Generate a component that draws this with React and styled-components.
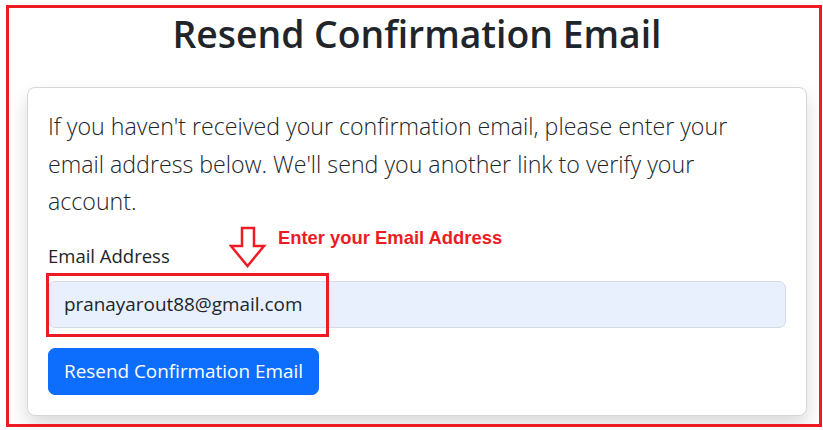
import React from 'react';
import styled, { createGlobalStyle } from 'styled-components';

const GlobalStyle = createGlobalStyle`
  html, body {
    margin: 0;
    padding: 0;
    background: #fff;
  }
  body {
    font-family: 'Open Sans', 'Noto Sans', sans-serif;
    color: #212529;
  }
  * {
    box-sizing: border-box;
  }
`;

// red frame of the annotated screenshot
const Frame = styled.div`
  display: flex;
  flex-direction: column;
  align-items: center;
  gap: 31px;
  width: 816px;
  height: 422px;
  margin: 5px 0 0 6px;
  padding: 4px 12px 0 18px;
  border: 3px solid #ed1c24;
  overflow: hidden;
`;

const Title = styled.h2`
  margin: 0;
  font-size: 37.3px;
  font-weight: 600;
  line-height: 44px;
  color: #212529;
`;

const Card = styled.div`
  display: flex;
  flex-direction: column;
  align-items: stretch;
  gap: 20px;
  width: 780px;
  padding: 20px;
  background: #fff;
  border: 1px solid #d6d6d6;
  border-radius: 8px;
  box-shadow: 0 10px 20px rgba(0, 0, 0, 0.15);
`;

const Lead = styled.p`
  max-width: 712px;
  margin: 0;
  font-size: 23.2px;
  font-weight: 300;
  line-height: 37.5px;
  color: #212529;
`;

const Field = styled.div`
  position: relative;
  display: flex;
  flex-direction: column;
  gap: 10px;
`;

const Label = styled.label`
  font-size: 18.5px;
  line-height: 30px;
`;

const Input = styled.input`
  width: 100%;
  height: 47px;
  padding: 0 15px;
  font-family: inherit;
  font-size: 18.9px;
  color: #212529;
  background: #e8f0fe;
  border: 1px solid #d5dbe3;
  border-radius: 7px;
  outline: none;
`;

const Button = styled.button`
  align-self: flex-start;
  height: 47px;
  padding: 0 15px;
  font-family: inherit;
  font-size: 18.9px;
  color: #fff;
  background: #0d6efd;
  border: 1px solid #0d6efd;
  border-radius: 7px;
  cursor: pointer;
`;

// annotation overlays
const Arrow = styled.svg`
  position: absolute;
  left: 181px;
  top: -15px;
`;

const Note = styled.span`
  position: absolute;
  left: 230px;
  top: -14px;
  font-family: 'Liberation Sans', Arial, sans-serif;
  font-size: 18.4px;
  font-weight: 700;
  line-height: 22px;
  color: #ed1c24;
`;

const Highlight = styled.div`
  position: absolute;
  left: -2px;
  top: 32px;
  width: 283px;
  height: 64px;
  border: 3px solid #ed1c24;
  pointer-events: none;
`;

export default function App() {
  return (
    <>
      <GlobalStyle />
      <Frame>
        <Title>Resend Confirmation Email</Title>
        <Card>
          <Lead>
            If you haven't received your confirmation email, please enter your
            email address below. We'll send you another link to verify your
            account.
          </Lead>
          <Field>
            <Label htmlFor="email">Email Address</Label>
            <Input id="email" type="email" defaultValue="pranayarout88@gmail.com" />
            <Arrow width="38" height="43" viewBox="0 0 38 43">
              <polygon
                points="13,2 25,2 25,20 35,20 18.5,40 2,20 13,20"
                fill="#fff"
                stroke="#ed1c24"
                strokeWidth="2.5"
              />
            </Arrow>
            <Note>Enter your Email Address</Note>
            <Highlight />
          </Field>
          <Button type="button">Resend Confirmation Email</Button>
        </Card>
      </Frame>
    </>
  );
}
